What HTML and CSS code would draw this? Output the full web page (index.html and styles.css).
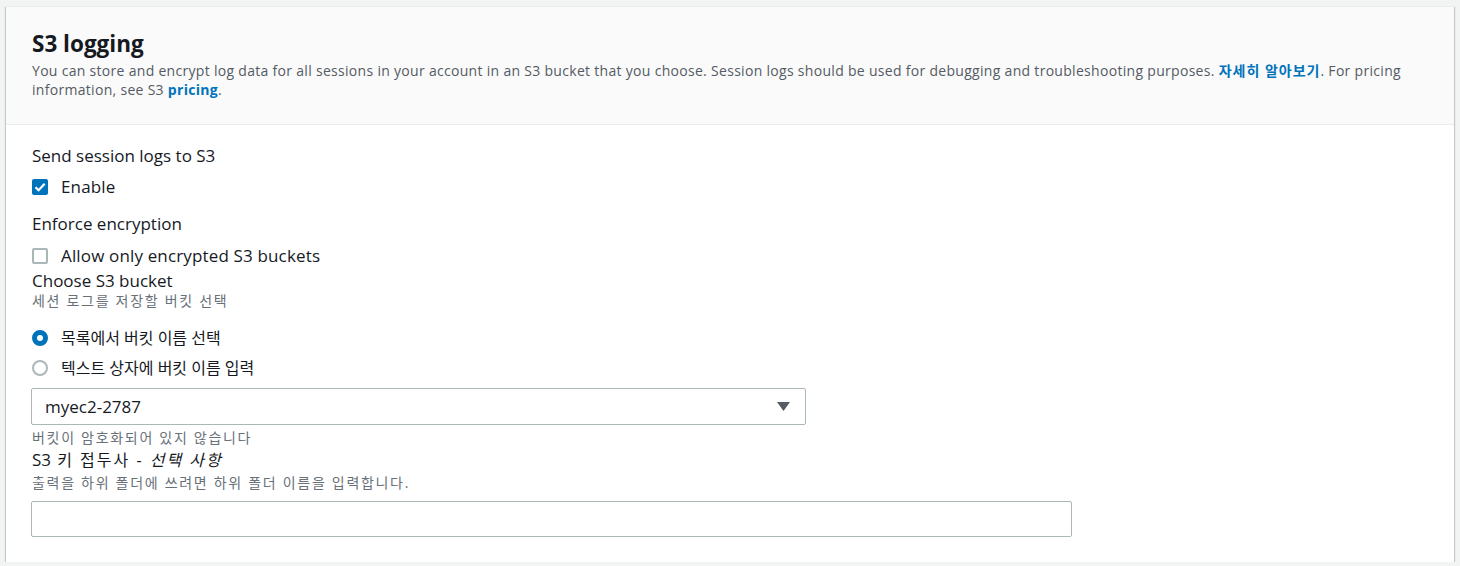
FILE: index.html
```html
<!DOCTYPE html>
<html lang="ko">
<head>
<meta charset="utf-8">
<link rel="stylesheet" href="styles.css">
</head>
<body>
<div class="card">
  <div class="card-header">
    <h2 class="title">S3 logging</h2>
    <p class="desc">You can store and encrypt log data for all sessions in your account in an S3 bucket that you choose. Session logs should be used for debugging and troubleshooting purposes. <a class="link link-ko" href="#">자세히 알아보기</a>. For pricing information, see S3 <a class="link" href="#">pricing</a>.</p>
  </div>
  <div class="card-body">
    <div class="label">Send session logs to S3</div>
    <label class="check-row row-enable">
      <span class="checkbox checked">
        <svg viewBox="0 0 16 16" width="16" height="16"><path d="M3.5 8.2 L6.6 11.2 L12.6 4.8" fill="none" stroke="#fff" stroke-width="2.2"/></svg>
      </span>
      <span class="check-text">Enable</span>
    </label>
    <div class="label label-enforce">Enforce encryption</div>
    <label class="check-row row-allow">
      <span class="checkbox"></span>
      <span class="check-text">Allow only encrypted S3 buckets</span>
    </label>
    <div class="label label-choose">Choose S3 bucket</div>
    <div class="hint">세션 로그를 저장할 버킷 선택</div>
    <label class="radio-row row-first">
      <span class="radio checked"></span>
      <span class="check-text">목록에서 버킷 이름 선택</span>
    </label>
    <label class="radio-row row-second">
      <span class="radio"></span>
      <span class="check-text">텍스트 상자에 버킷 이름 입력</span>
    </label>
    <div class="select">
      <span class="select-value">myec2-2787</span>
      <svg class="caret" viewBox="0 0 13 9" width="13" height="9"><path d="M0 0 H13 L6.5 9 Z" fill="#545b64"/></svg>
    </div>
    <div class="hint hint-constraint">버킷이 암호화되어 있지 않습니다</div>
    <div class="label label-prefix"><span class="prefix-en">S3</span> 키 접두사 - <i>선택 사항</i></div>
    <div class="hint hint-prefix">출력을 하위 폴더에 쓰려면 하위 폴더 이름을 입력합니다.</div>
    <div class="text-input"></div>
  </div>
</div>
</body>
</html>
```
FILE: styles.css
```css
html, body {
  margin: 0;
  padding: 0;
}
body {
  background: #f2f3f3;
  padding: 6px 6px 0 6px;
  font-family: "Open Sans", "Noto Sans", "Noto Sans CJK KR", sans-serif;
  color: #16191f;
}
.card {
  background: #ffffff;
  box-shadow: 0 1px 1px 0 rgba(0, 28, 36, 0.3), 1px 1px 1px 0 rgba(0, 28, 36, 0.15), -1px 1px 1px 0 rgba(0, 28, 36, 0.15);
  border-top: 1px solid #eaeded;
  height: 556px;
  box-sizing: border-box;
}
.card-header {
  background: #fafafa;
  border-bottom: 1px solid #eaeded;
  padding: 21px 25px 0 26px;
  height: 118px;
  box-sizing: border-box;
}
.title {
  margin: 0;
  font-size: 22.5px;
  line-height: 32px;
  font-weight: 700;
  color: #16191f;
}
.desc {
  margin: 1px 0 0 0;
  font-size: 14px;
  line-height: 19px;
  letter-spacing: 0.3px;
  color: #545b64;
}
.link {
  color: #0073bb;
  font-weight: 700;
  text-decoration: none;
}
.link-ko {
  letter-spacing: 1px;
}
.card-body {
  padding: 19px 25px 0 25px;
  display: flex;
  flex-direction: column;
  align-items: flex-start;
}
.label {
  font-size: 17px;
  line-height: 24px;
  color: #16191f;
  padding-left: 1px;
}
.label i {
  font-style: italic;
}
.check-row, .radio-row {
  display: flex;
  align-items: center;
  gap: 13px;
  font-size: 17px;
  line-height: 24px;
  height: 24px;
}
.check-row {
  letter-spacing: 0.15px;
}
.radio-row {
  font-size: 16px;
}
.row-enable { margin-top: 7px; }
.label-enforce { margin-top: 13px; }
.row-allow { margin-top: 8px; }
.label-choose { margin-top: 1px; }
.row-first { margin-top: 17px; }
.row-second { margin-top: 6px; }
.checkbox {
  width: 16px;
  height: 16px;
  box-sizing: border-box;
  border: 2px solid #aab7b8;
  border-radius: 2px;
  background: #fff;
  display: flex;
  margin-left: 1px;
}
.checkbox.checked {
  background: #0073bb;
  border-color: #0073bb;
}
.checkbox svg {
  margin: -2px;
}
.radio {
  width: 16px;
  height: 16px;
  box-sizing: border-box;
  border: 2px solid #aab7b8;
  border-radius: 50%;
  background: #fff;
  margin-left: 1px;
}
.radio.checked {
  border: 5px solid #0073bb;
}
.hint {
  font-size: 14px;
  line-height: 16px;
  letter-spacing: 1.7px;
  color: #687078;
  padding-left: 1px;
}
.select {
  margin-top: 8px;
  width: 775px;
  height: 37px;
  box-sizing: border-box;
  border: 1px solid #aab7b8;
  border-radius: 2px;
  display: flex;
  align-items: center;
  justify-content: space-between;
  padding: 0 15px 0 13px;
  font-size: 17px;
  color: #16191f;
}
.hint-constraint { margin-top: 5px; }
.label-prefix {
  margin-top: 2px;
  font-size: 16px;
  letter-spacing: 2px;
}
.prefix-en {
  font-size: 17px;
  letter-spacing: 0;
}
.hint-prefix { margin-top: 3px; }
.text-input {
  margin-top: 10px;
  width: 1041px;
  height: 36px;
  box-sizing: border-box;
  border: 1px solid #aab7b8;
  border-radius: 2px;
}
```
